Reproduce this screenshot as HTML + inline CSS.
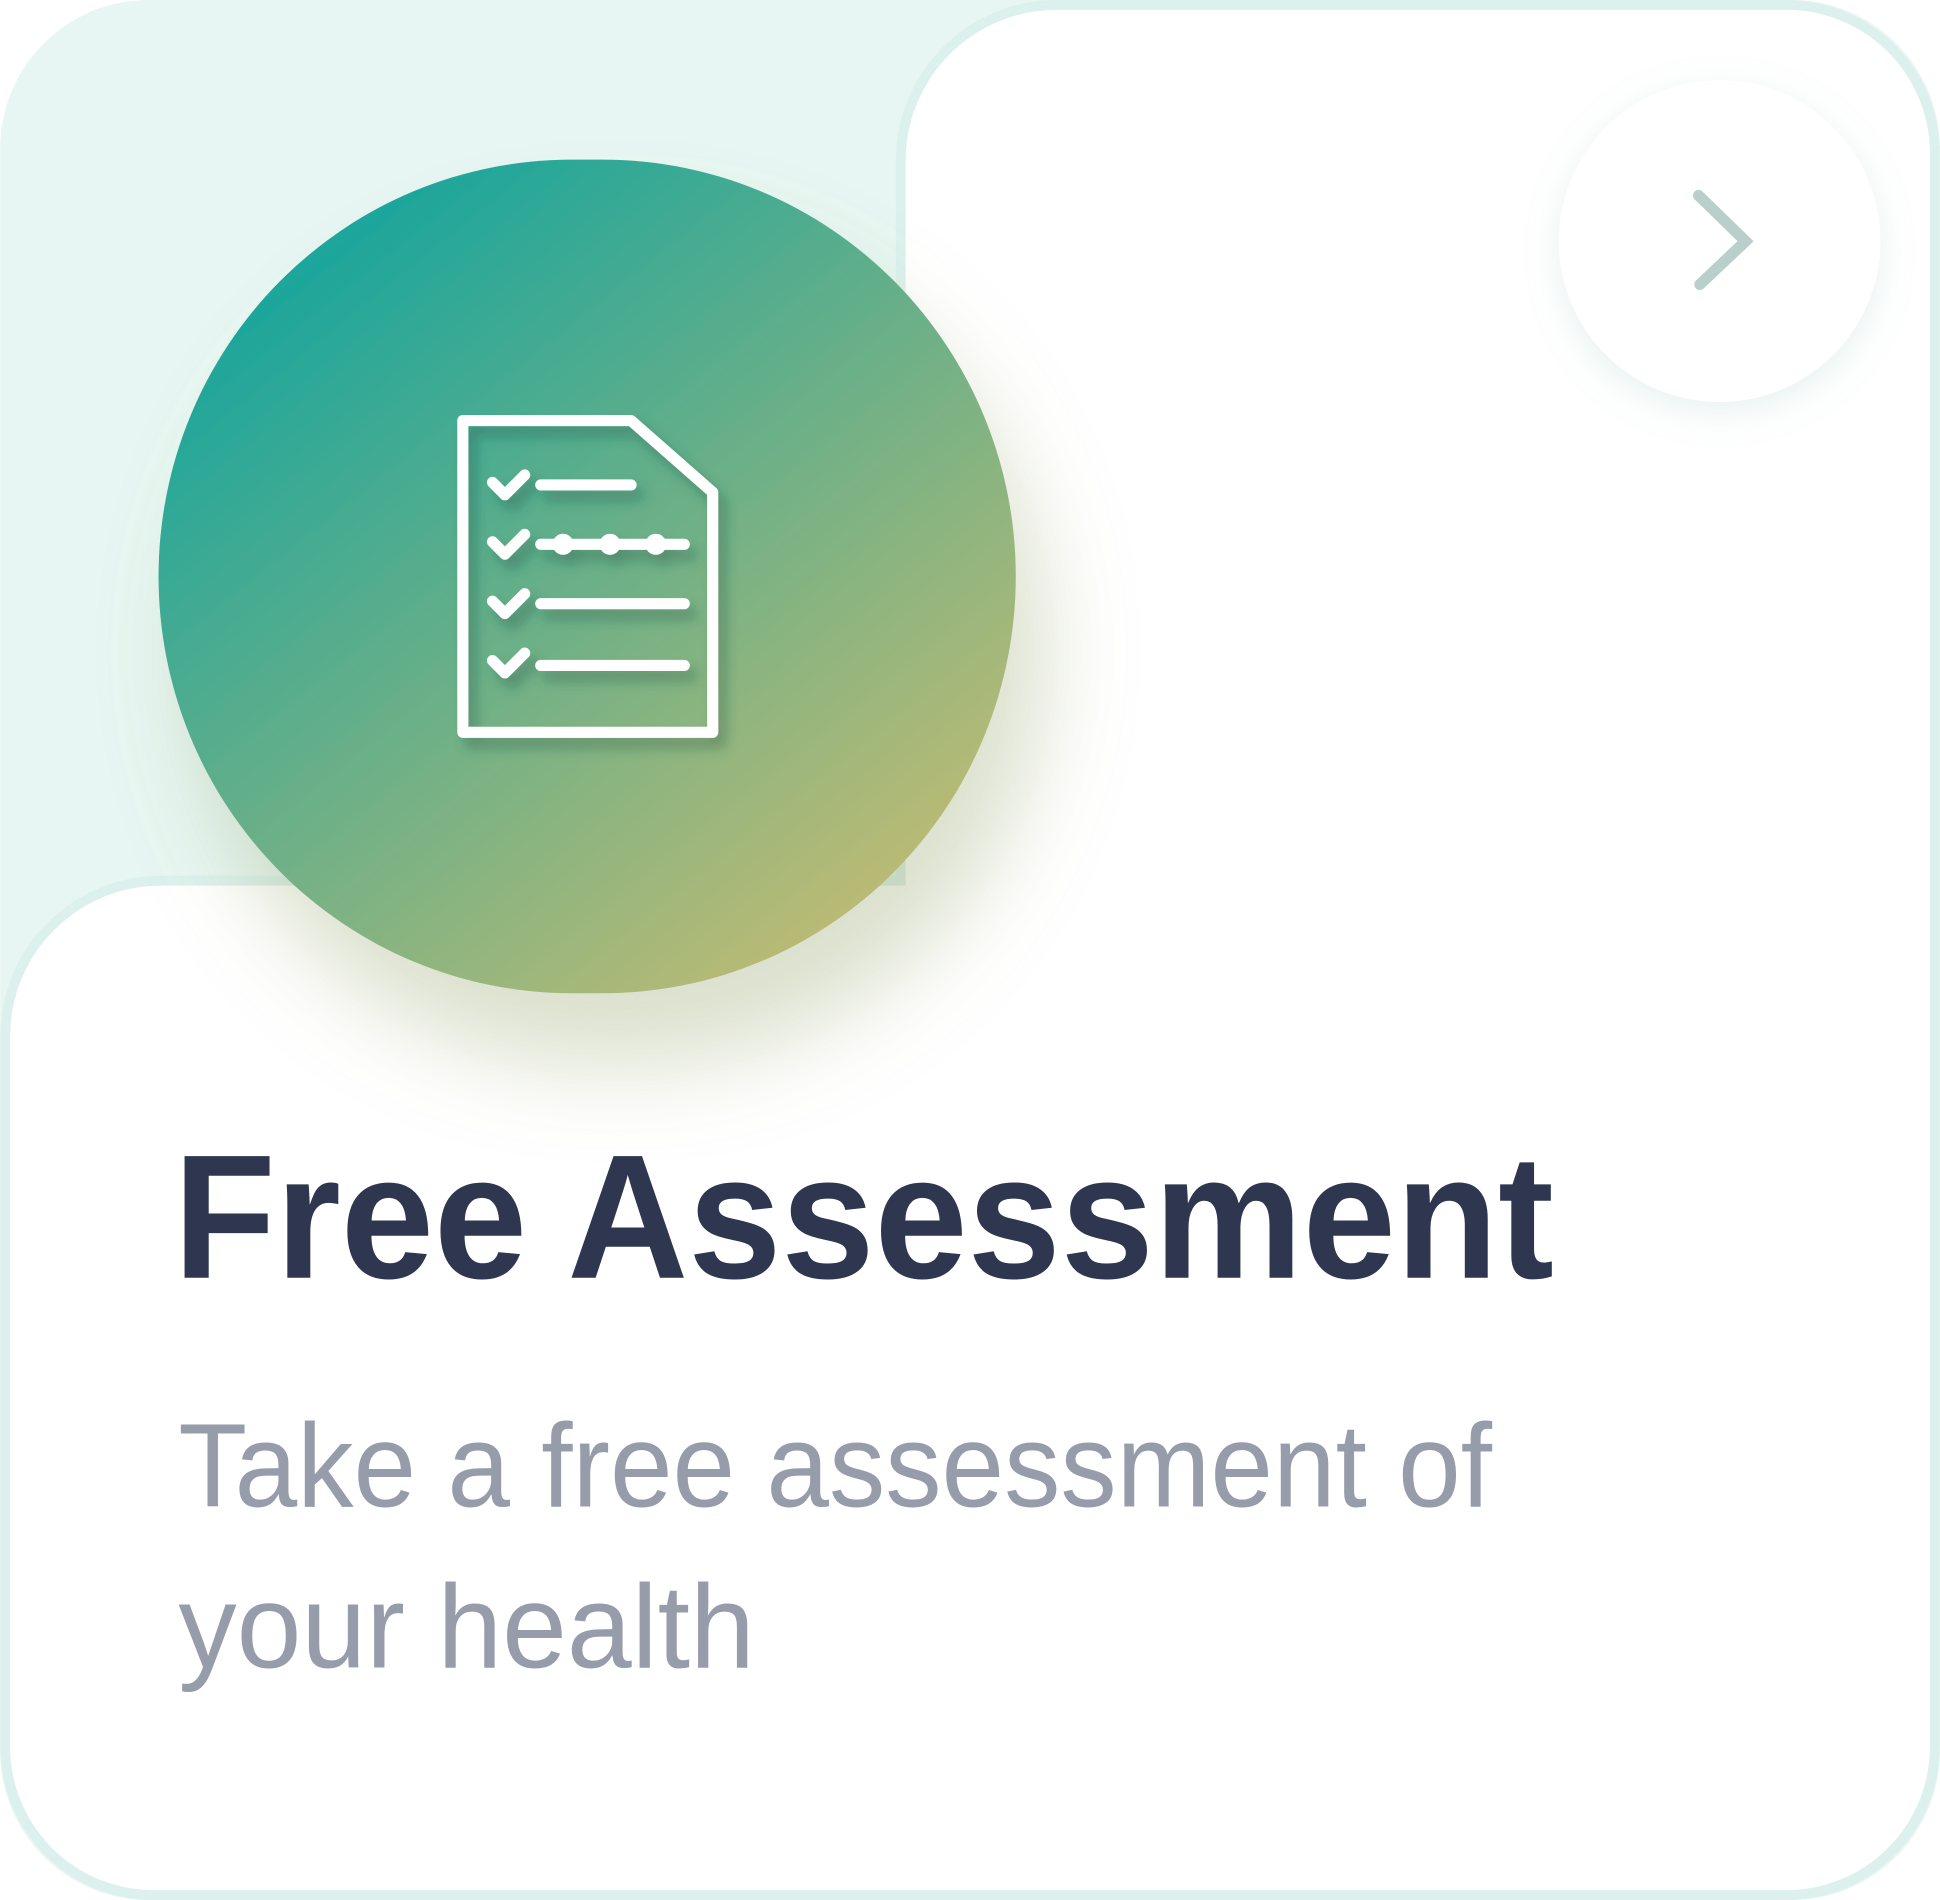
<!DOCTYPE html>
<html><head><meta charset="utf-8"><style>
html,body{margin:0;padding:0;background:#fff;}
svg{display:block;}
</style></head><body>
<svg width="1940" height="1900" viewBox="0 0 1568 1536" xmlns="http://www.w3.org/2000/svg">
<defs>
<linearGradient id="g" x1="0.15" y1="0.1" x2="0.85" y2="0.95">
<stop offset="0" stop-color="#17a59d"/>
<stop offset="0.5" stop-color="#6db087"/>
<stop offset="1" stop-color="#c3bc72"/>
</linearGradient>
<filter id="sh2" x="-40%" y="-40%" width="180%" height="180%">
<feDropShadow dx="0" dy="8" stdDeviation="14" flood-color="#7fb5aa" flood-opacity="0.18"/>
</filter>
<filter id="sh3" x="-20%" y="-20%" width="140%" height="140%">
<feDropShadow dx="6" dy="8" stdDeviation="5" flood-color="#1d4a40" flood-opacity="0.35"/>
</filter>
<filter id="cs" x="-40%" y="-40%" width="180%" height="180%">
<feDropShadow dx="25" dy="60" stdDeviation="35" flood-color="#8a9a5a" flood-opacity="0.3"/>
</filter>
</defs>
<rect x="0" y="0" width="1568" height="1536" rx="120" fill="#e7f6f2"/>
<path d="M728,712 L728,130 A126,126 0 0 1 854,4 L1444,4 A120,120 0 0 1 1564,124 L1564,1412 A120,120 0 0 1 1444,1532 L124,1532 A120,120 0 0 1 4,1412 L4,838 A126,126 0 0 1 130,712 Z" fill="#fff" stroke="#dcf1ed" stroke-width="8"/>
<circle cx="1390" cy="195" r="130" fill="#fff" filter="url(#sh2)"/>
<path d="M1373,158 L1411,195 L1374,230" fill="none" stroke="#b9cfcc" stroke-width="9" stroke-linecap="round"/>
<path d="M462,129 L487,129 A334,337 0 0 1 487,803 L462,803 A334,337 0 0 1 462,129 Z" fill="url(#g)" filter="url(#cs)"/>
<g filter="url(#sh3)" fill="none" stroke="#fff" stroke-width="9" stroke-linecap="round" stroke-linejoin="round">
<path d="M374,340 L510,340 L576,398 L576,592 L374,592 Z"/>
<path d="M398,390 L408,400 L424,384"/>
<path d="M398,438 L408,448 L424,432"/>
<path d="M398,486 L408,496 L424,480"/>
<path d="M398,534 L408,544 L424,528"/>
<path d="M437,392 L510,392"/>
<path d="M437,440 L553,440"/>
<path d="M437,488 L553,488"/>
<path d="M437,538 L553,538"/>
<circle cx="455" cy="440" r="4" fill="#fff"/>
<circle cx="493" cy="440" r="4" fill="#fff"/>
<circle cx="530" cy="440" r="4" fill="#fff"/>
</g>
<text x="140" y="1033" font-family="Liberation Sans, sans-serif" font-weight="bold" font-size="143" fill="#2f3650" textLength="1116" lengthAdjust="spacingAndGlyphs">Free Assessment</text>
<text x="144" y="1218" font-family="Liberation Sans, sans-serif" font-size="96" fill="#979cab" textLength="1062" lengthAdjust="spacingAndGlyphs">Take a free assessment of</text>
<text x="144" y="1348" font-family="Liberation Sans, sans-serif" font-size="96" fill="#979cab" textLength="466" lengthAdjust="spacingAndGlyphs">your health</text>
</svg>
</body></html>
